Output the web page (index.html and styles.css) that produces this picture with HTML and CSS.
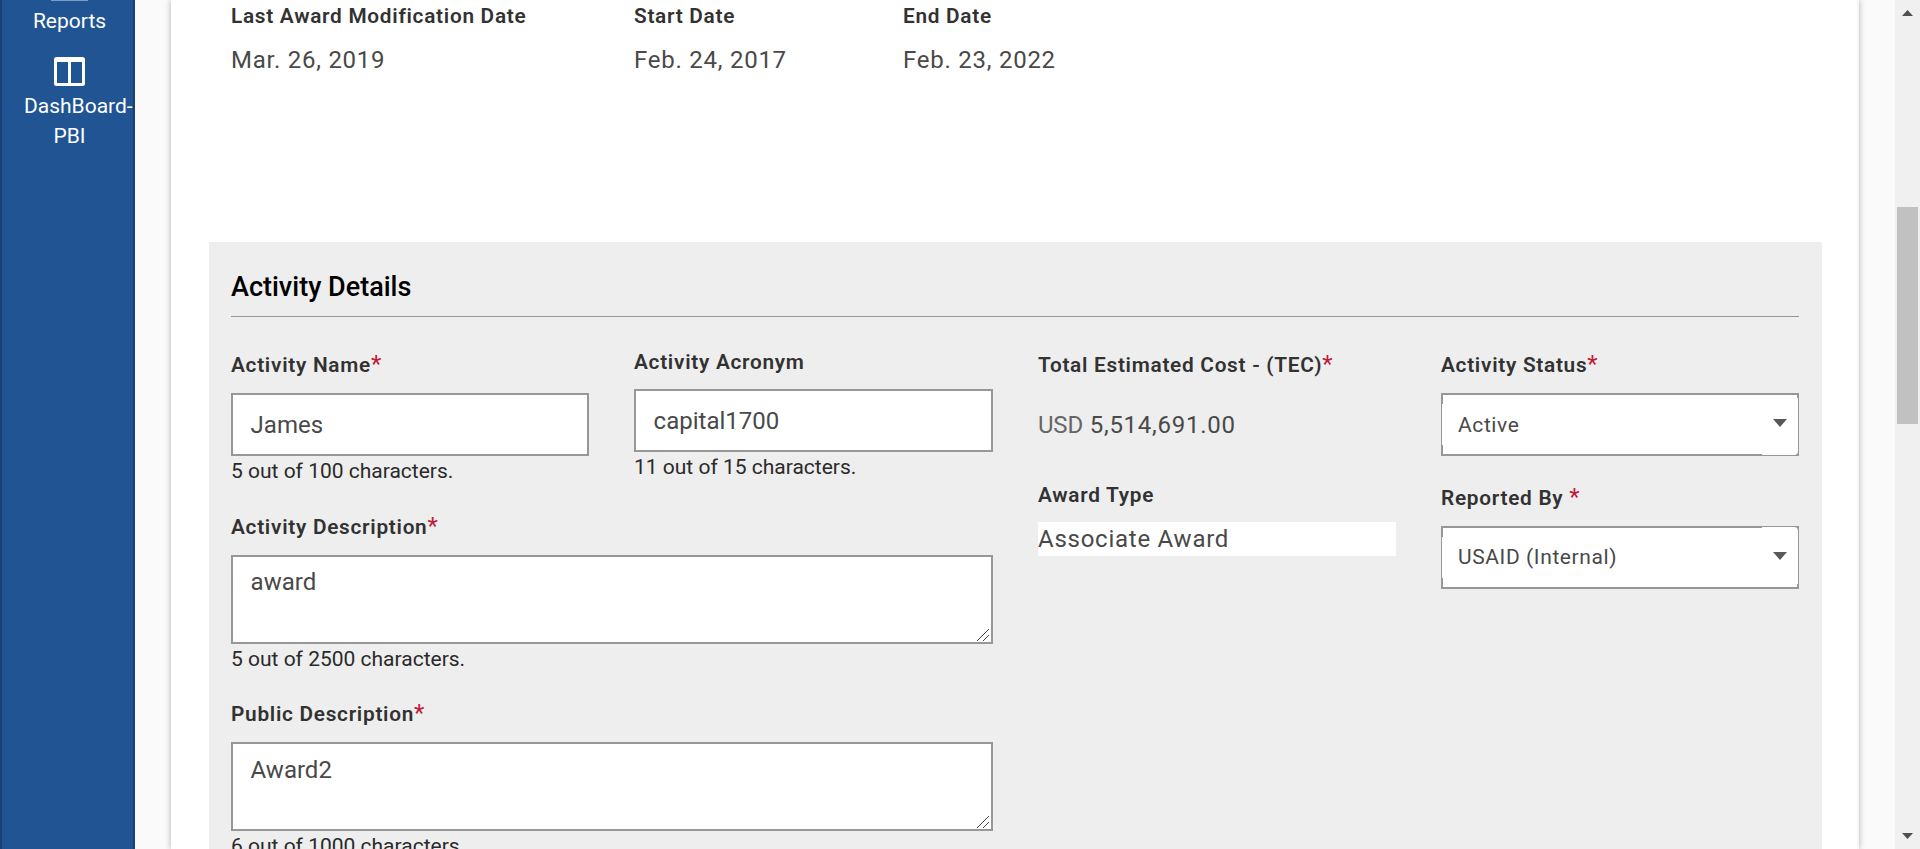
FILE: index.html
```
<!DOCTYPE html>
<html lang="en">
<head>
<meta charset="utf-8">
<title>Activity Details</title>
<link rel="stylesheet" href="styles.css">
</head>
<body>
<div class="app">
  <nav class="sidebar">
    <div class="stub"></div>
    <a class="nav-item reports">Reports</a>
    <a class="nav-item">
      <svg class="nav-icon" width="31" height="29" viewBox="0 0 31 29"><path fill="#fff" fill-rule="evenodd" d="M2.500 0h26A2.500 2.500 0 0 1 31 2.500v24A2.500 2.500 0 0 1 28.500 29h-26A2.500 2.500 0 0 1 0 26.500v-24A2.500 2.500 0 0 1 2.500 0zM3 5v21h11V5zM17 5v21h11V5z"/></svg>
      DashBoard-<br>PBI
    </a>
  </nav>
  <main class="main">
    <div class="card">
      <section class="dates">
        <div class="field"><div class="label">Last Award Modification Date</div><div class="value">Mar. 26, 2019</div></div>
        <div class="field"><div class="label">Start Date</div><div class="value">Feb. 24, 2017</div></div>
        <div class="field"><div class="label">End Date</div><div class="value">Feb. 23, 2022</div></div>
      </section>
      <section class="panel">
        <h2 class="heading">Activity Details</h2>
        <div class="columns">
          <div class="left">
            <div class="pair">
              <div class="field">
                <div class="label">Activity Name<span class="req">*</span></div>
                <div class="input">James</div>
                <div class="hint">5 out of 100 characters.</div>
              </div>
              <div class="field acronym">
                <div class="label">Activity Acronym</div>
                <div class="input">capital1700</div>
                <div class="hint">11 out of 15 characters.</div>
              </div>
            </div>
            <div class="field">
              <div class="label">Activity Description<span class="req">*</span></div>
              <div class="area">award<svg class="grip" width="12" height="12" viewBox="0 0 12 12"><path d="M0 12 12 0M6 12l6-6" stroke="#444" stroke-width="1"/></svg></div>
              <div class="hint">5 out of 2500 characters.</div>
            </div>
            <div class="field public">
              <div class="label">Public Description<span class="req">*</span></div>
              <div class="area">Award2<svg class="grip" width="12" height="12" viewBox="0 0 12 12"><path d="M0 12 12 0M6 12l6-6" stroke="#444" stroke-width="1"/></svg></div>
              <div class="hint">6 out of 1000 characters.</div>
            </div>
          </div>
          <div class="cost">
            <div class="label">Total Estimated Cost - (TEC)<span class="req">*</span></div>
            <div class="amount"><span class="currency">USD</span> 5,514,691.00</div>
            <div class="label award-label">Award Type</div>
            <div class="award">Associate Award</div>
          </div>
          <div class="status">
            <div class="label">Activity Status<span class="req">*</span></div>
            <div class="select cut-bottom"><span>Active</span><i class="arrow"></i></div>
            <div class="label">Reported By <span class="req">*</span></div>
            <div class="select cut-top"><span>USAID (Internal)</span><i class="arrow"></i></div>
          </div>
        </div>
      </section>
    </div>
  </main>
  <div class="scrollbar">
    <svg width="11" height="6" viewBox="0 0 11 6"><path fill="#505050" d="M5.500 0 11 6H0z"/></svg>
    <div class="thumb"></div>
    <svg class="down" width="11" height="6" viewBox="0 0 11 6"><path fill="#505050" d="M0 0h11L5.500 6z"/></svg>
  </div>
</div>
</body>
</html>
```
FILE: styles.css
```
* { box-sizing: border-box; }
body { margin: 0; font-family: Roboto, "Liberation Sans", sans-serif; background: #fafafa; overflow: hidden; }
.app { display: flex; width: 1920px; height: 849px; overflow: hidden; }
.sidebar { width: 135px; flex: none; background: #205493; border: solid #1a3f72; border-width: 0 2px; color: #fff; font-size: 21px; line-height: 30px; text-align: center; padding-left: 22px; white-space: nowrap; }
.stub { width: 37px; height: 1px; margin-left: 27px; background: #7e9abf; }
.nav-item { display: block; width: 91px; }
.reports { padding-top: 5px; height: 56px; }
.nav-icon { display: block; margin: 0 auto 5px; }
.main { flex: 1; padding: 0 36px; background: #fafafa; overflow: hidden; }
.card { height: 849px; background: #fff; border-right: 2px solid #f7f7f7; box-shadow: 0 0 6px rgba(0,0,0,.3); padding: 0 35px 0 38px; overflow: hidden; }
.dates { height: 242px; display: grid; grid-template-columns: 403px 269px 1fr; padding: 3px 22px 0; }
.label { font-size: 20.8px; line-height: 26px; font-weight: 600; color: #323232; letter-spacing: .72px; white-space: nowrap; }
.req { color: #c01a38; font-weight: 400; font-size: 24px; line-height: 20px; letter-spacing: 0; }
.value, .amount, .award { font-size: 24px; color: #494949; letter-spacing: .75px; }
.value { margin-top: 14px; line-height: 34px; }
.panel { height: 607px; background: #eee; padding: 24px 23px 0 22px; }
.heading { margin: 0; height: 51px; border-bottom: 1px solid #979797; font-size: 27px; line-height: 42px; font-weight: 500; color: #000; }
.columns { display: grid; grid-template-columns: 762px 358px 358px; column-gap: 45px; padding-top: 35px; }
.pair { display: grid; grid-template-columns: 358px 359px; column-gap: 45px; height: 162px; }
.input { margin-top: 15px; height: 63px; border: 2px solid #979797; background: #fff; padding: 0 17.600px; font-size: 24px; line-height: 60px; color: #494949; }
.acronym { margin-top: -3px; }
.acronym .input { margin-top: 14px; }
.hint { font-size: 21px; line-height: 30px; color: #2a2a2a; }
.area { position: relative; margin-top: 15px; height: 89px; border: 2px solid #979797; background: #fff; padding: 7px 17.600px; font-size: 24px; line-height: 36px; color: #494949; }
.grip { position: absolute; right: 2px; bottom: 1px; }
.public { margin-top: 27px; }
.public .area { padding-top: 8px; }
.amount { height: 63px; margin-top: 15px; line-height: 64px; white-space: nowrap; }
.currency { color: #666; letter-spacing: -.2px; }
.award-label { margin-top: 26px; }
.award { margin-top: 14px; height: 34px; line-height: 34px; background: #fff; }
.select { position: relative; margin: 15px 0 29px; height: 63px; border: 2px solid #979797; background: #fff; padding: 0 10px 0 15px; font-size: 21px; line-height: 60px; color: #494949; letter-spacing: .6px; display: flex; justify-content: space-between; }
.cut-top { line-height: 58px; }
/* The inner control covers the inner pixel of the frame, except at the corners. */
.select::before { content: ""; position: absolute; top: 9px; bottom: 9px; left: -1px; width: 1px; background: #fff; }
.select::after { content: ""; position: absolute; right: -1px; width: 36px; background: #fff; }
.cut-bottom::after { top: 3px; bottom: -1px; border-bottom-right-radius: 4px; }
.cut-top::after { top: -1px; bottom: 3px; border-top-right-radius: 4px; }
.arrow { position: relative; z-index: 1; height: 0; border: 7px solid transparent; border-top: 8px solid #55595c; border-bottom: 0; margin-top: 24px; }
.scrollbar { width: 25px; flex: none; background: #f0f0f0; display: flex; flex-direction: column; align-items: center; padding: 10px 0; }
.thumb { width: 21px; height: 217px; margin-top: 191px; background: #c1c1c1; }
.down { margin-top: auto; }
```
